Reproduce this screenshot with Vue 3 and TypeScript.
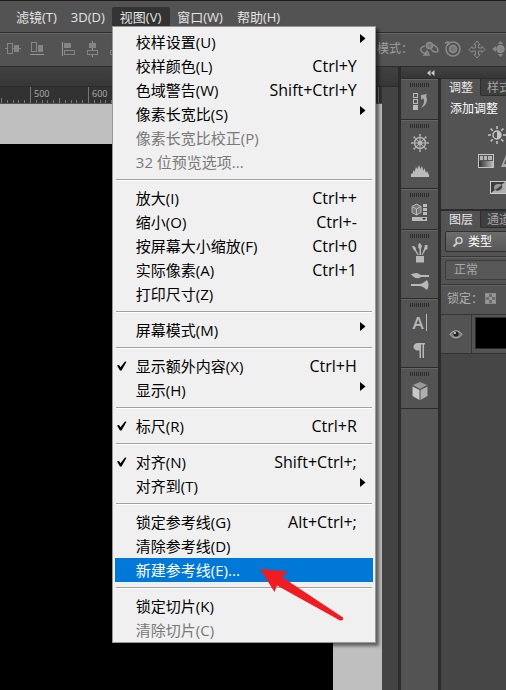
<script setup lang="ts">
interface MenuEntry {
  label: string
  keys?: string
  sub?: boolean
  checked?: boolean
  disabled?: boolean
  active?: boolean
}

const menus: string[] = ['滤镜(T)', '3D(D)', '视图(V)', '窗口(W)', '帮助(H)']

const groups: MenuEntry[][] = [
  [
    { label: '校样设置(U)', sub: true },
    { label: '校样颜色(L)', keys: 'Ctrl+Y' },
    { label: '色域警告(W)', keys: 'Shift+Ctrl+Y' },
    { label: '像素长宽比(S)', sub: true },
    { label: '像素长宽比校正(P)', disabled: true },
    { label: '32 位预览选项...', disabled: true },
  ],
  [
    { label: '放大(I)', keys: 'Ctrl++' },
    { label: '缩小(O)', keys: 'Ctrl+-' },
    { label: '按屏幕大小缩放(F)', keys: 'Ctrl+0' },
    { label: '实际像素(A)', keys: 'Ctrl+1' },
    { label: '打印尺寸(Z)' },
  ],
  [{ label: '屏幕模式(M)', sub: true }],
  [
    { label: '显示额外内容(X)', keys: 'Ctrl+H', checked: true },
    { label: '显示(H)', sub: true },
  ],
  [{ label: '标尺(R)', keys: 'Ctrl+R', checked: true }],
  [
    { label: '对齐(N)', keys: 'Shift+Ctrl+;', checked: true },
    { label: '对齐到(T)', sub: true },
  ],
  [
    { label: '锁定参考线(G)', keys: 'Alt+Ctrl+;' },
    { label: '清除参考线(D)' },
    { label: '新建参考线(E)...', active: true },
  ],
  [{ label: '锁定切片(K)' }, { label: '清除切片(C)', disabled: true }],
]

// Ruler ticks: ten per 100 document pixels, with a taller one at the half.
const ticks = Array.from({ length: 66 }, (_, i) => {
  const n = i - 5
  return { x: Math.round(30 + n * 5.8), h: n % 10 === 0 ? 16 : n % 5 === 0 ? 5 : 3 }
})
const marks = ['500', '600'].map((text, i) => ({ text, x: 34 + i * 58 }))
const spokes = [0, 45, 90, 135, 180, 225, 270, 315]
</script>

<template>
  <div class="app">
    <nav class="menubar">
      <div v-for="(m, i) in menus" :key="m" class="menu-slot">
        <button type="button" class="menu-title" :class="{ open: i === 2 }">{{ m }}</button>
        <div v-if="i === 2" class="menu" role="menu">
          <div v-for="(g, gi) in groups" :key="gi" class="menu-group">
            <button
              v-for="e in g"
              :key="e.label"
              type="button"
              role="menuitem"
              class="entry"
              :class="{ active: e.active }"
              :disabled="e.disabled"
            >
              <span class="mark">
                <svg v-if="e.checked" width="10" height="10" viewBox="0 0 10 10"><path d="M0 4.500 2 4l1.500 2.200L8 0.500l1.500.300L4.500 9.500H3z" fill="#000" /></svg>
              </span>
              <span class="label">{{ e.label }}</span>
              <span class="keys">{{ e.keys }}</span>
              <span class="arrow">
                <svg v-if="e.sub" width="6" height="10" viewBox="0 0 6 10"><path d="M0 0 5.500 4.500 0 9z" fill="#000" /></svg>
              </span>
            </button>
          </div>
          <svg class="pointer" width="86" height="56" viewBox="0 0 86 56">
            <path d="M1 2 29 4.500 23 10 84 50.500Q85 54 81 53.500L18 18.500 15.500 25z" fill="#f01c24" />
          </svg>
        </div>
      </div>
    </nav>

    <div class="options">
      <svg width="114" height="32" viewBox="0 0 114 32" fill="none" stroke="#858585">
        <path d="M5 14.500h2M13 14.500h2M19 14.500h2" />
        <rect x="7.500" y="9.500" width="5" height="10" />
        <rect x="14" y="11" width="5" height="7" fill="#858585" stroke="none" />
        <path d="M30 20.500h14" stroke="#999" />
        <rect x="31.500" y="8.500" width="5" height="9" />
        <rect x="38" y="11" width="5" height="7" fill="#858585" stroke="none" />
        <path d="M62.500 8v14" stroke="#999" />
        <rect x="64" y="9" width="7" height="5" fill="#858585" stroke="none" />
        <rect x="64.500" y="16.500" width="10" height="4" />
        <path d="M92.500 7v2M92.500 14v2M92.500 21v2" stroke="#999" />
        <rect x="89" y="9" width="7" height="5" fill="#858585" stroke="none" />
        <rect x="87.500" y="16.500" width="10" height="4" />
        <path d="M114 16.500h-3.500v4h3.500" />
      </svg>
      <div class="modes">
        <span>3D 模式：</span>
        <svg width="88" height="24" viewBox="0 0 88 24" fill="none" stroke="#8c8c8c" stroke-width="1.500">
          <path d="M7 10c-3 .5-5 2.500-4 4.500s3 3 6 3.500M6 19h5l-2-4zM13 13c2 3.500 7 4 7 1.500s-2-4.500-6-6" />
          <circle cx="11.500" cy="9.500" r="3" fill="#777" />
          <circle cx="35" cy="13" r="7" /><circle cx="35" cy="13" r="3.500" fill="#777" />
          <path d="M27 7l3-1 1 3" />
          <path d="M59 5l3 3.500h-1.500V12H64v-1.500l3 3-3 3V15h-3.500v3.500H62L59 22l-3-3.500h1.500V15H54v1.500l-3-3 3-3V12h3.500V8.500H56z" stroke-width="1" />
          <circle cx="82.500" cy="13" r="3.500" fill="#858585" />
          <path d="M82.500 5l3 3h-6zM82.500 21l3-3h-6zM74 13l4-3v6z" fill="#858585" stroke="none" />
        </svg>
      </div>
    </div>

    <div class="workspace">
      <main class="document">
        <div class="tabstrip"></div>
        <div class="doc-body">
          <div class="view">
            <div class="ruler">
              <svg width="382" height="17" viewBox="0 0 382 17">
                <rect v-for="t in ticks" :key="t.x" :x="t.x" :y="16 - t.h" width="1" :height="t.h" fill="#777" />
                <text v-for="m in marks" :key="m.text" :x="m.x" y="10">{{ m.text }}</text>
              </svg>
            </div>
            <div class="pasteboard"><div class="artwork"></div></div>
          </div>
          <div class="scroll"></div>
        </div>
      </main>

      <aside class="side">
        <div class="side-head">
          <svg width="8" height="6" viewBox="0 0 8 6"><path d="M3.500 0v6L0 3zM7.500 0v6L4 3z" fill="#c8c8c8" /></svg>
        </div>
        <div class="side-body">
          <div class="dock">
            <section class="dock-group">
              <div class="grip"></div>
              <button type="button" aria-label="历史记录">
                <svg width="20" height="20" viewBox="0 0 20 20" fill="none" stroke="#bbb">
                  <rect x="3.500" y="1.500" width="4" height="4" /><rect x="3.500" y="7.500" width="4" height="4" />
                  <rect x="3" y="13" width="5" height="5" fill="#bbb" stroke="none" />
                  <path d="M11 3l6-1-1 2c2 4 1 9-5 12 3-4 4-7 2-10l-2 2z" fill="#aaa" stroke="none" />
                </svg>
              </button>
            </section>
            <section class="dock-group">
              <div class="grip"></div>
              <button type="button" aria-label="导航器">
                <svg width="20" height="20" viewBox="0 0 20 20" stroke="#b4b4b4">
                  <circle cx="10" cy="10" r="5.500" fill="none" stroke-width="1.500" />
                  <circle cx="10" cy="10" r="2" fill="#b4b4b4" />
                  <path v-for="a in spokes" :key="a" d="M10 10V1M9 2h2" :transform="`rotate(${a} 10 10)`" />
                </svg>
              </button>
              <button type="button" aria-label="直方图">
                <svg width="20" height="20" viewBox="0 0 20 20"><path d="M1 16v-3l2-1V9l1.500 2L6 6l1.500 2L9 4l1.500 4L12 5l1.500 5 1-3 1.500 5 1-2 2 4v2z" fill="#bbb" /></svg>
              </button>
            </section>
            <section class="dock-group">
              <div class="grip"></div>
              <button type="button" aria-label="属性">
                <svg width="20" height="20" viewBox="0 0 20 20">
                  <path d="M2 4.500l4.500-2.500 4.500 2.500v6L6.500 13 2 10.500z" fill="#777" stroke="#bbb" /><path d="M2 4.500l4.500 2.500 4.500-2.500M6.500 7v6" fill="none" stroke="#bbb" />
                  <path d="M13 2h4v3h-4zM13 6h4v3h-4zM13 10h4v3h-4zM2 15h15v4H2z" fill="#bbb" /><path d="M12 16h4l-2 2z" fill="#333" />
                </svg>
              </button>
            </section>
            <section class="dock-group">
              <div class="grip"></div>
              <button type="button" aria-label="画笔预设">
                <svg width="20" height="20" viewBox="0 0 20 20" fill="#b8b8b8">
                  <path d="M6 13h8v6.500H6zM2 3c3 0 4 1 4 4l3 5H7.500L5 8C3 7 3 5 2 3zM8.500 1l1.500-1 2 3-1 3v6H9.500V6C8 5 8 3 8.500 1zM15 2h2.500v4l-2 1-3 5h-1l2.500-6z" />
                </svg>
              </button>
              <button type="button" aria-label="画笔">
                <svg width="20" height="20" viewBox="0 0 20 20" fill="#b8b8b8">
                  <path d="M1 3c3 0 5-2 8 0l2 1h8v2h-8L9 7C6 8 3 6 1 3zM1 13h9l3-1 4-3c2 3 2 7 0 10l-4-3-3-1H1z" />
                </svg>
              </button>
            </section>
            <section class="dock-group">
              <div class="grip"></div>
              <button type="button" class="letter" aria-label="字符">A<i></i></button>
              <button type="button" aria-label="段落">
                <svg width="20" height="20" viewBox="0 0 20 20"><path d="M8 3h7v1.500h-1V18h-1.500V4.500H11V18H9.500v-7.500H8C2 10.500 2 3 8 3z" fill="#b8b8b8" /></svg>
              </button>
            </section>
            <section class="dock-group">
              <div class="grip"></div>
              <button type="button" aria-label="3D">
                <svg width="20" height="20" viewBox="0 0 20 20">
                  <path d="M10 1l7 3-7 4-7-4z" fill="#999" /><path d="M2.500 5.500 9.500 9v10l-7-4z" fill="#c8c8c8" /><path d="M17.500 5.500 10.500 9v10l7-4z" fill="#aeaeae" />
                </svg>
              </button>
            </section>
          </div>

          <div class="panels">
            <section class="adjust">
              <div class="tabs"><button type="button" class="on">调整</button><button type="button">样式</button></div>
              <h2>添加调整</h2>
              <div class="tools first">
                <svg width="20" height="20" viewBox="0 0 20 20" stroke="#c4c4c4">
                  <circle cx="10" cy="10" r="4" fill="none" stroke-width="1.500" /><path d="M10 6a4 4 0 0 1 0 8z" fill="#c4c4c4" stroke="none" />
                  <path v-for="a in spokes" :key="a" d="M10 1v3" stroke-width="1.500" :transform="`rotate(${a} 10 10)`" />
                </svg>
              </div>
              <div class="tools second">
                <svg width="16" height="14" viewBox="0 0 16 14">
                  <defs>
                    <linearGradient id="ramp"><stop offset="0" stop-color="#333" /><stop offset="1" stop-color="#bbb" /></linearGradient>
                  </defs>
                  <rect x="0.500" y="0.500" width="15" height="13" fill="#555" stroke="#c4c4c4" />
                  <path d="M2 2h3v4H2zM6 2h3v4H6zM10 2h4v4h-4z" fill="#b4b4b4" /><rect x="1" y="7" width="14" height="6" fill="url(#ramp)" />
                </svg>
                <svg width="18" height="16" viewBox="0 0 18 16"><path d="M5 1h2v3l5 9H0z" fill="#aaa" /><path d="M5 5l3 5H3z" fill="#555" /></svg>
              </div>
              <div class="tools third">
                <svg width="17" height="13" viewBox="0 0 17 13">
                  <rect x="0.500" y="0.500" width="16" height="12" fill="#b0b0b0" stroke="#ccc" /><path d="M1 12V1h14z" fill="#3d3d3d" />
                  <ellipse cx="8.500" cy="6.500" rx="4.500" ry="3.500" fill="#999" /><path d="M5 9l7-5c1 4-4 7-7 5z" fill="#444" />
                </svg>
              </div>
            </section>
            <section class="layers">
              <div class="tabs"><button type="button" class="on">图层</button><button type="button">通道</button></div>
              <div class="row filter">
                <div class="combo">
                  <svg width="12" height="12" viewBox="0 0 12 12" fill="none" stroke="#ccc" stroke-width="1.500"><circle cx="7" cy="4.500" r="3" /><path d="M5 7 1.500 10.500" stroke-width="2" /></svg>
                  <select aria-label="图层过滤"><option>类型</option></select>
                </div>
              </div>
              <div class="row blend"><select aria-label="混合模式"><option>正常</option></select></div>
              <div class="row lock">
                <span>锁定：</span>
                <svg width="11" height="11" viewBox="0 0 11 11"><rect x="0.500" y="0.500" width="10" height="10" fill="#6b6b6b" stroke="#8c8c8c" /><path d="M1 1h3v3H1zM7 1h3v3H7zM4 4h3v3H4zM1 7h3v3H1zM7 7h3v3H7z" fill="#9a9a9a" /></svg>
              </div>
              <div class="layer">
                <button type="button" class="eye" aria-label="可见性">
                  <svg width="14" height="10" viewBox="0 0 14 10"><path d="M1 5.500C4 .5 10 .5 13 5.500 10 10 4 10 1 5.500z" fill="#777" stroke="#b4b4b4" /><circle cx="7" cy="5" r="2.500" fill="#222" /><circle cx="6" cy="4" r="1" fill="#ddd" /></svg>
                </button>
                <div class="thumb"></div>
              </div>
            </section>
          </div>
        </div>
      </aside>
    </div>
  </div>
</template>

<style>
html,
body {
  background: #282828;
}
</style>

<style scoped>
* {
  box-sizing: border-box;
}
.app {
  display: flex;
  flex-direction: column;
  height: 100vh;
  overflow: hidden;
  font-family: 'Open Sans', 'Noto Sans CJK SC', sans-serif;
  font-size: 12px;
  color: #e4e4e4;
}
button {
  margin: 0;
  padding: 0;
  border: 0;
  background: none;
  font: inherit;
  color: inherit;
  white-space: nowrap;
}
svg {
  display: block;
  flex: none;
}
.menubar {
  display: flex;
  flex: none;
  height: 33px;
  padding: 6px 0 0 9px;
  background: #535353;
  border-top: 1px solid #1c1c1c;
  border-bottom: 1px solid #2e2e2e;
}
.menu-slot {
  position: relative;
}
.menu-title {
  display: block;
  height: 19px;
  padding: 0 7px;
  font-size: 13px;
  line-height: 18px;
}
.menu-title.open {
  padding: 0 9px 0 8px;
  background: #333;
  border-radius: 2px 2px 0 0;
}
.menu {
  position: absolute;
  z-index: 5;
  top: 19px;
  left: 0;
  width: 264px;
  padding: 3px 2px 0;
  background: #f0f0f0;
  border: 1px solid #989898;
  box-shadow: 3px 3px 3px rgba(0, 0, 0, 0.5);
  color: #000;
}
.menu-group + .menu-group::before {
  content: '';
  display: block;
  height: 1px;
  margin: 5px 1px;
  background: #a0a0a0;
  border-bottom: 1px solid #fff;
  background-clip: padding-box;
}
.entry {
  display: flex;
  align-items: center;
  width: 100%;
  height: 24px;
  font-size: 15px;
  line-height: 24px;
  text-align: left;
}
.entry:disabled {
  color: #787878;
}
.entry.active {
  background: #0078d7;
  color: #fff;
}
.mark {
  width: 21px;
  padding-left: 2px;
}
.label {
  flex: 1;
}
.keys {
  font-size: 16px;
}
.arrow {
  width: 16px;
  height: 16px;
  padding-left: 3px;
}
.pointer {
  position: absolute;
  left: 146px;
  top: 540px;
}
.options {
  display: flex;
  flex: none;
  height: 34px;
  justify-content: space-between;
  background: #535353;
  border-top: 1px solid #686868;
  border-bottom: 1px solid #2c2c2c;
}
.modes {
  display: flex;
  align-items: center;
  gap: 5px;
  height: 28px;
  color: #a0a0a0;
}
.workspace {
  display: flex;
  flex: 1;
  min-height: 0;
}
.document {
  display: flex;
  flex: 1;
  flex-direction: column;
  min-width: 0;
}
.tabstrip {
  height: 20px;
  flex: none;
  background: linear-gradient(#414141, #363636);
  border-bottom: 1px solid #2c2c2c;
}
.doc-body {
  display: flex;
  flex: 1;
}
.view {
  display: flex;
  flex: 1;
  flex-direction: column;
  min-width: 0;
}
.ruler {
  height: 17px;
  overflow: hidden;
  background: #323232;
  border-bottom: 1px solid #555;
}
.ruler text {
  fill: #b0b0b0;
  font-size: 9px;
}
.pasteboard {
  display: flex;
  flex: 1;
  padding: 40px 49px 0 0;
  background: #bfbfbf;
}
.artwork {
  flex: 1;
  background: #000;
}
.scroll {
  width: 16px;
  background: #434343;
}
.side {
  display: flex;
  flex: none;
  flex-direction: column;
  width: 108px;
  padding-left: 3px;
  background: #2b2b2b;
}
.side-head {
  height: 12px;
  flex: none;
  padding: 3px 0 0 26px;
  background: linear-gradient(#414141, #363636);
  border-bottom: 1px solid #2b2b2b;
}
.side-body {
  display: flex;
  flex: 1;
  gap: 3px;
  min-height: 0;
}
.dock {
  width: 37px;
  flex: none;
  background: #535353;
}
.dock-group {
  display: flex;
  flex-direction: column;
  align-items: center;
  padding: 3px 0;
  border-top: 1px solid #666;
  border-bottom: 1px solid #2b2b2b;
}
.grip {
  width: 20px;
  height: 5px;
  background: repeating-linear-gradient(90deg, #2c2c2c 0 1px, transparent 1px 2px);
  border-bottom: 1px solid #535353;
}
.dock-group button {
  display: flex;
  align-items: center;
  justify-content: center;
  width: 37px;
  height: 28px;
}
.letter {
  gap: 2px;
  color: #b8b8b8;
  font-size: 17px;
  font-weight: 600;
}
.letter i {
  width: 1px;
  height: 17px;
  background: #b8b8b8;
}
.panels {
  display: flex;
  flex: 1;
  flex-direction: column;
  overflow: hidden;
  background: #464646;
}
.adjust {
  height: 131px;
  flex: none;
  background: #535353;
  border-bottom: 1px solid #2b2b2b;
}
.layers {
  border-top: 1px solid #2b2b2b;
}
.tabs {
  display: flex;
  height: 17px;
  background: #3f3f3f;
}
.tabs button {
  flex: none;
  width: 40px;
  height: 17px;
  padding: 0 0 0 6px;
  border-bottom: 1px solid #2e2e2e;
  color: #a4a4a4;
  line-height: 17px;
  text-align: left;
}
.tabs .on {
  padding-left: 8px;
  background: #535353;
  border-color: #535353;
  border-right: 1px solid #2e2e2e;
  color: #e8e8e8;
}
h2 {
  margin: 4px 0 0 9px;
  font-size: 12px;
  font-weight: 400;
  line-height: 18px;
  white-space: nowrap;
  color: #fff;
}
.tools {
  display: flex;
  gap: 7px;
}
.first {
  padding: 7px 0 0 46px;
}
.second {
  padding: 9px 0 0 37px;
}
.third {
  padding: 11px 0 0 49px;
}
.row {
  display: flex;
  background: #535353;
  border-bottom: 1px solid #363636;
}
.row + .row {
  border-top: 1px solid #636363;
}
.filter {
  height: 29px;
  padding: 3px 0 0 4px;
}
.blend {
  height: 28px;
  padding: 2px 0 0 4px;
}
.lock {
  height: 30px;
  gap: 2px;
  padding: 7px 0 0 6px;
  color: #b0b0b0;
  line-height: 12px;
}
.lock span {
  width: 36px;
  white-space: nowrap;
}
.combo {
  display: flex;
  flex: none;
  align-items: center;
  width: 120px;
  height: 21px;
  padding-left: 6px;
  background: linear-gradient(#6c6c6c, #585858);
  border: 1px solid #303030;
  border-radius: 2px;
}
select {
  appearance: none;
  margin: 0;
  padding: 0;
  border: 0;
  background: none;
  font: inherit;
  color: #fff;
  line-height: 18px;
}
.combo select {
  width: 90px;
  margin-left: 4px;
}
.blend select {
  flex: none;
  width: 120px;
  height: 20px;
  padding-left: 8px;
  background: #575757;
  border: 1px solid #3c3c3c;
  border-radius: 2px;
  color: #a8a8a8;
}
.layer {
  display: flex;
  height: 39px;
  background: #535353;
  border-bottom: 1px solid #333;
}
.eye {
  display: flex;
  align-items: center;
  justify-content: center;
  width: 31px;
  flex: none;
  border-right: 1px solid #363636;
}
.thumb {
  width: 50px;
  height: 32px;
  flex: none;
  margin: 2px 0 0 3px;
  background: #000;
  border: 1px solid #2a2a2a;
}
</style>
